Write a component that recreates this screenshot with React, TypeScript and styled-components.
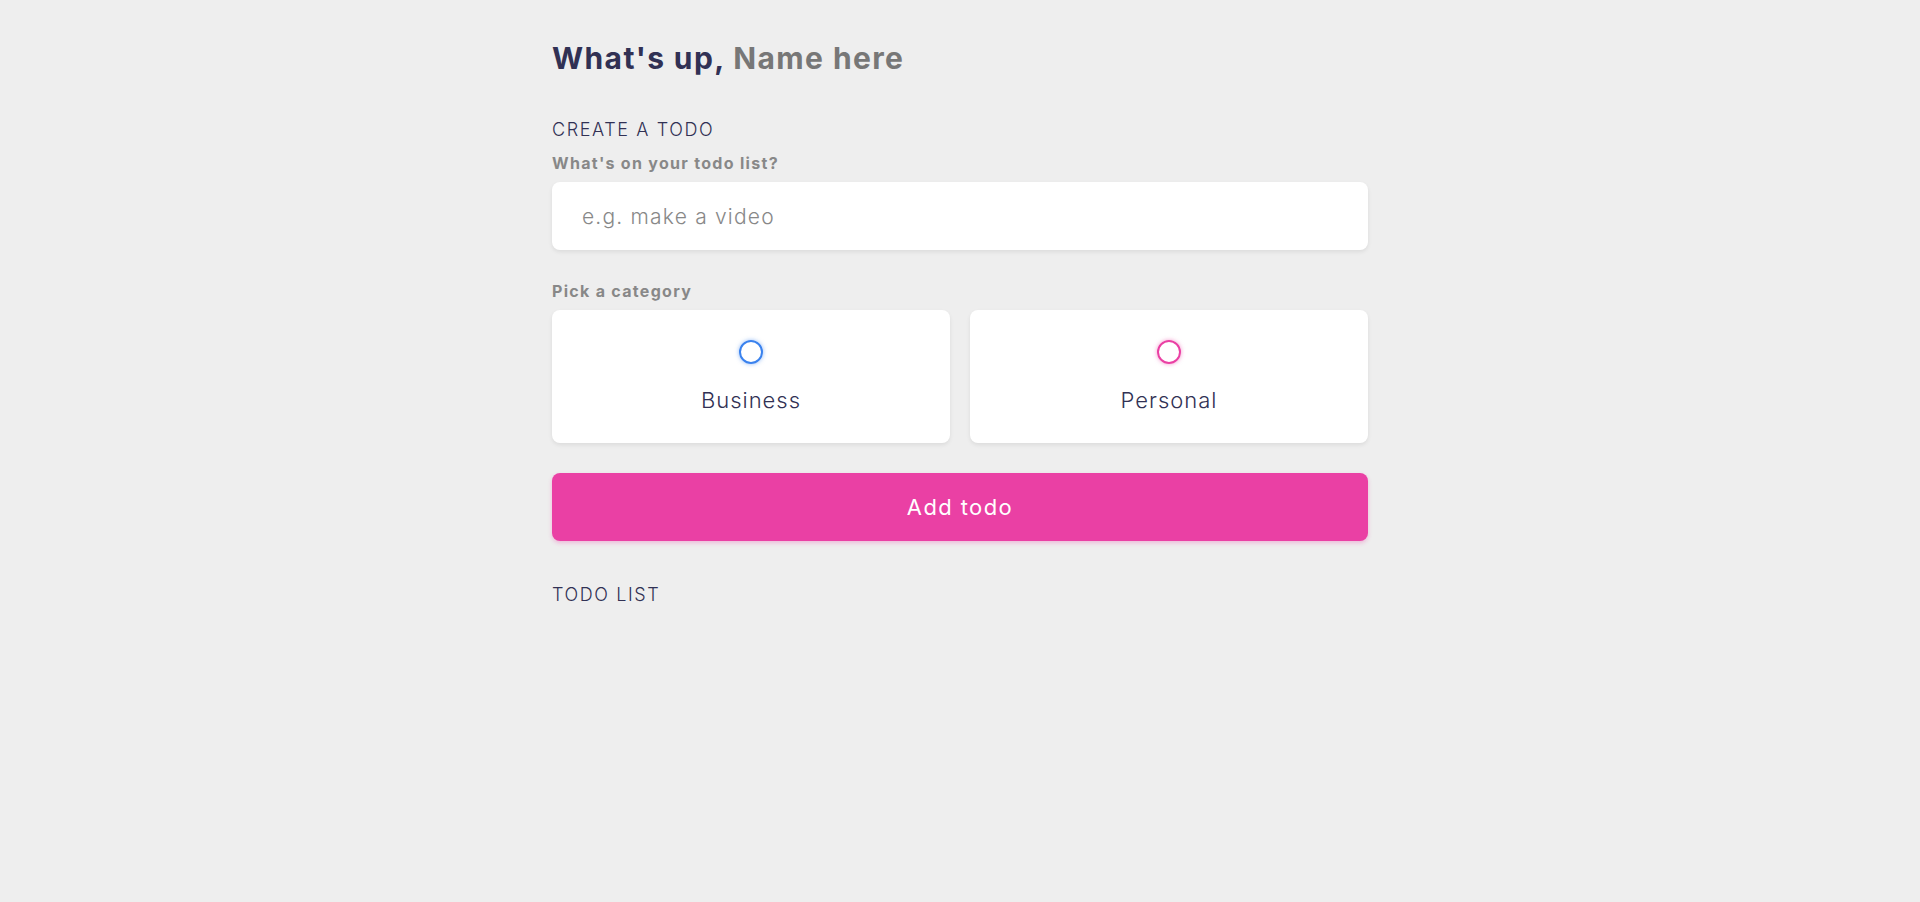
import styled, { createGlobalStyle } from "styled-components";

const GlobalStyle = createGlobalStyle`
    * {
        box-sizing: border-box;
    }
    body {
        margin: 0;
        background: #eeeeee;
        font-family: "Inter", "Open Sans", sans-serif;
        color: #313154;
    }
`

const Page = styled.main`
    width: 816px;
    margin: 0 auto;
    padding-top: 38px;
`

const Greeting = styled.h2`
    margin: 0 0 40px;
    font-size: 30px;
    line-height: 40px;
    font-weight: 700;
    letter-spacing: 1.4px;
    color: #313154;
`

const Name = styled.span`
    color: #777777;
`

const SectionTitle = styled.h3`
    margin: 0 0 11px;
    font-size: 18px;
    font-weight: 300;
    line-height: 24px;
    letter-spacing: 1.6px;
    color: #313154;
`

const Label = styled.h4`
    margin: 0 0 9px;
    font-size: 16px;
    font-weight: 700;
    line-height: 20px;
    letter-spacing: 1.3px;
    color: #888888;
`

const TodoInput = styled.input`
    display: block;
    width: 100%;
    height: 68px;
    padding: 0 30px;
    margin-bottom: 31px;
    border: none;
    border-radius: 8px;
    background: #fff;
    box-shadow: 0 2px 4px rgba(0, 0, 0, 0.08);
    font-family: inherit;
    font-size: 21px;
    font-weight: 300;
    letter-spacing: 1.2px;
    color: #313154;
    outline: none;

    &::placeholder {
        color: #888888;
    }
`

const Options = styled.div`
    display: grid;
    grid-template-columns: 1fr 1fr;
    gap: 20px;
    margin-bottom: 30px;
`

const Option = styled.label`
    display: flex;
    flex-direction: column;
    align-items: center;
    height: 133px;
    padding-top: 30px;
    background: #fff;
    border-radius: 8px;
    box-shadow: 0 2px 4px rgba(0, 0, 0, 0.08);
    cursor: pointer;
`

const Bubble = styled.span<{ $color: string }>`
    display: block;
    width: 24px;
    height: 24px;
    border-radius: 50%;
    border: 2px solid ${p => p.$color};
    box-shadow: 0 0 4px ${p => p.$color}88;
    margin-bottom: 23px;
`

const OptionText = styled.span`
    font-size: 22px;
    font-weight: 300;
    line-height: 26px;
    letter-spacing: 1px;
    color: #313154;
`

const AddButton = styled.button`
    display: block;
    width: 100%;
    height: 68px;
    border: none;
    border-radius: 8px;
    background: #ea40a4;
    box-shadow: 0 2px 4px rgba(234, 64, 164, 0.3);
    color: #fff;
    font-family: inherit;
    font-size: 22px;
    font-weight: 400;
    letter-spacing: 1.4px;
    cursor: pointer;
    margin-bottom: 42px;
`

export default function App() {
    return (
        <>
            <GlobalStyle />
            <Page>
                <Greeting>
                    What's up, <Name>Name here</Name>
                </Greeting>

                <section>
                    <SectionTitle>CREATE A TODO</SectionTitle>
                    <form onSubmit={e => e.preventDefault()}>
                        <Label>What's on your todo list?</Label>
                        <TodoInput type="text" placeholder="e.g. make a video" />

                        <Label>Pick a category</Label>
                        <Options>
                            <Option>
                                <Bubble $color="#3a82ee" />
                                <OptionText>Business</OptionText>
                            </Option>
                            <Option>
                                <Bubble $color="#ea40a4" />
                                <OptionText>Personal</OptionText>
                            </Option>
                        </Options>

                        <AddButton type="submit">Add todo</AddButton>
                    </form>
                </section>

                <section>
                    <SectionTitle>TODO LIST</SectionTitle>
                </section>
            </Page>
        </>
    )
}
